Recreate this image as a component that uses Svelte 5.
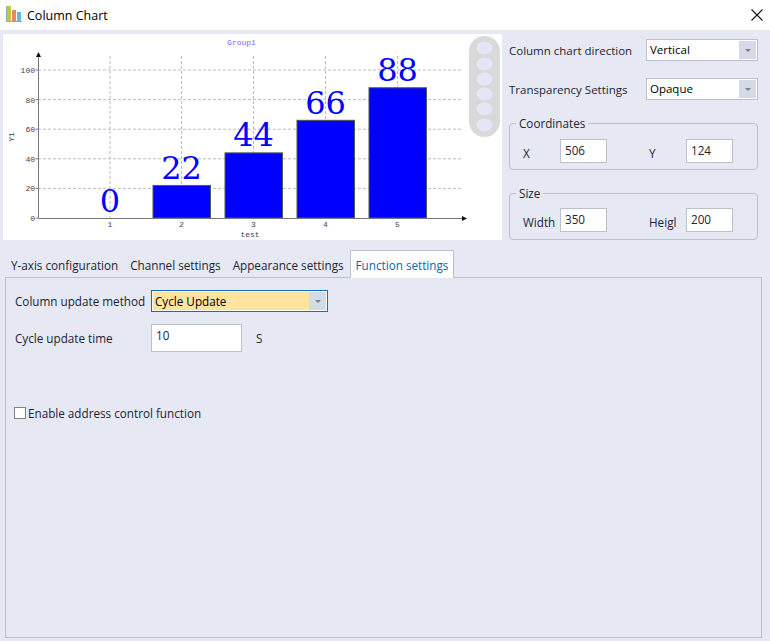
<script lang="ts">
	const yTicks = [0, 20, 40, 60, 80, 100];
	const slots = [110, 181.5, 253.5, 325.5, 397.5];
	const values = [0, 22, 44, 66, 88];
	const knobs = [48, 64, 79, 94, 109, 125];
	const tabs = ['Y-axis configuration', 'Channel settings', 'Appearance settings', 'Function settings'];

	const baseY = 218;
	const scale = 1.48;
	function yOf(v: number) {
		return baseY - v * scale;
	}
</script>

<div class="window">
	<header class="titlebar">
		<svg class="app-icon" width="16" height="16" viewBox="0 0 16 16">
			<rect x="1" y="0" width="4" height="15" fill="#b4cf3a" />
			<rect x="6" y="4" width="4" height="11" fill="#f0826a" />
			<rect x="11" y="6" width="4" height="9" fill="#5cb8ea" />
			<path d="M0.5 0v15.5H16" fill="none" stroke="#9aa8b4" />
		</svg>
		<span class="title">Column Chart</span>
		<svg class="close" width="12" height="12" viewBox="0 0 12 12">
			<path d="M0.5 0.5l11 11M11.5 0.5l-11 11" stroke="#111" stroke-width="1.1" />
		</svg>
	</header>

	<div class="top">
		<svg class="chart" width="499" height="206" viewBox="3 34 499 206">
			<text class="group" x="241.5" y="45" text-anchor="middle">Group1</text>

			{#each yTicks.slice(1) as t}
				<line class="grid" x1="38" x2="462" y1={yOf(t)} y2={yOf(t)} />
			{/each}
			{#each slots as x}
				<line class="grid" x1={x} x2={x} y1="56" y2={baseY} />
			{/each}

			{#each slots as x, i}
				{#if values[i] > 0}
					<rect class="bar" x={x - 28.5} y={yOf(values[i])} width="57.5" height={values[i] * scale} />
				{/if}
				<text class="value" x={x} y={yOf(values[i]) - 6.5} text-anchor="middle">{values[i]}</text>
				<text class="tick" x={x} y="227" text-anchor="middle">{i + 1}</text>
			{/each}

			<path class="axis" d="M38.5 56V218.5H462" />
			<path d="M38.5 52l-2.5 5h5z" fill="#111" />
			<path d="M467 218.5l-5-2.5v5z" fill="#111" />

			{#each yTicks as t}
				<line class="axis" x1="35.5" x2="38" y1={yOf(t)} y2={yOf(t)} />
				<text class="tick" x="35" y={yOf(t) + 3} text-anchor="end">{t}</text>
			{/each}

			<text class="tick" x="250" y="237" text-anchor="middle">test</text>
			<text class="tick" transform="translate(14 137) rotate(-90)" text-anchor="middle">Y1</text>

			<rect x="469" y="36" width="31" height="101" rx="15.5" fill="#d9d9d9" />
			{#each knobs as cy}
				<ellipse cx="484.5" {cy} rx="8" ry="6.5" fill="#e4e6f6" />
			{/each}
		</svg>

		<aside class="side">
			<div class="field">
				<span>Column chart direction</span>
				<div class="combo"><span class="combo-text">Vertical</span><span class="combo-btn"><i></i></span></div>
			</div>
			<div class="field">
				<span>Transparency Settings</span>
				<div class="combo"><span class="combo-text">Opaque</span><span class="combo-btn"><i></i></span></div>
			</div>
			<fieldset class="coords">
				<legend>Coordinates</legend>
				<label class="pair"><span>X</span><input value="506" readonly /></label>
				<label class="pair"><span>Y</span><input value="124" readonly /></label>
			</fieldset>
			<fieldset class="size">
				<legend>Size</legend>
				<label class="pair"><span>Width</span><input value="350" readonly /></label>
				<label class="pair"><span>Heigl</span><input value="200" readonly /></label>
			</fieldset>
		</aside>
	</div>

	<nav class="tabs">
		{#each tabs as tab, i}
			<div class="tab" class:active={i === tabs.length - 1}>{tab}</div>
		{/each}
	</nav>

	<section class="pane">
		<div class="row first">
			<span class="row-label">Column update method</span>
			<div class="combo focused"><span class="combo-text">Cycle Update</span><span class="combo-btn"><i></i></span></div>
		</div>
		<div class="row second">
			<span class="row-label">Cycle update time</span>
			<input class="time" value="10" readonly />
			<span class="unit">S</span>
		</div>
		<label class="check">
			<span class="box"></span>
			Enable address control function
		</label>
	</section>
</div>

<style>
	:global(body) {
		margin: 0;
		background: #e6e9f3;
	}

	.window {
		width: 770px;
		height: 641px;
		overflow: hidden;
		background: #e6e9f3;
		color: #1c2433;
		font-family: "Open Sans", "Noto Sans", sans-serif;
		font-size: 11.7px;
	}

	.titlebar {
		height: 30px;
		background: #fff;
		display: flex;
		align-items: center;
		padding: 0 7px 0 6px;
		box-sizing: border-box;
	}

	.app-icon {
		margin-right: 5px;
		margin-bottom: 2px;
	}

	.title {
		flex: 1;
		font-size: 12.5px;
		color: #000;
	}

	.top {
		display: flex;
		padding: 4px 0 0 3px;
		height: 206px;
	}

	.chart {
		display: block;
		background: #fff;
		flex: none;
	}

	.group {
		font: 8px "Liberation Mono", monospace;
		fill: #6a6aff;
	}

	.grid {
		stroke: #bdbdbd;
		stroke-width: 1;
		stroke-dasharray: 3 2;
	}

	.axis {
		fill: none;
		stroke: #777;
		stroke-width: 1;
	}

	.bar {
		fill: #0000ff;
		stroke: #555;
		stroke-width: 1;
	}

	.value {
		font: 32px "DejaVu Serif", serif;
		fill: #0000ff;
	}

	.tick {
		font: 8px "Liberation Mono", monospace;
		fill: #444;
	}

	.side {
		width: 268px;
		flex: none;
		padding: 5px 12px 0 7px;
		box-sizing: border-box;
	}

	.field {
		display: flex;
		align-items: center;
		justify-content: space-between;
		height: 22px;
		margin-bottom: 17px;
		font-size: 11.5px;
	}

	.combo {
		display: flex;
		width: 112px;
		height: 22px;
		box-sizing: border-box;
		border: 1px solid #bcc0cc;
		background: #fff;
		padding: 1px;
		color: #000;
		flex: none;
	}

	.combo-text {
		flex: 1;
		padding-left: 2px;
		line-height: 18px;
	}

	.combo-btn {
		width: 17px;
		background: #d6dae8;
		display: flex;
		align-items: center;
		justify-content: center;
	}

	.combo-btn i {
		border: 3px solid transparent;
		border-top: 3px solid #7a7f8c;
		border-bottom: 0;
	}

	fieldset {
		margin: 0;
		min-width: 0;
		border: 1px solid #bcc0cc;
		border-radius: 4px;
		padding: 9px 0 0 13px;
		display: flex;
		gap: 42px;
		height: 54px;
		box-sizing: border-box;
		align-items: flex-start;
	}

	.coords {
		margin-top: -1px;
	}

	.size {
		margin-top: 16px;
		padding-top: 8px;
	}

	legend {
		padding: 0 3px;
		margin-left: -7px;
		line-height: 14px;
	}

	.pair {
		display: flex;
		align-items: center;
	}

	.pair span {
		width: 37px;
		flex: none;
		padding-top: 3px;
		white-space: nowrap;
	}

	input {
		width: 47px;
		height: 24px;
		box-sizing: border-box;
		border: 1px solid #bcc0cc;
		padding: 0 0 2px 4px;
		margin: 0;
		font: inherit;
		color: #1c2433;
		background: #fff;
		outline: none;
	}

	.tabs {
		display: flex;
		margin-top: 10px;
		padding-left: 5px;
		height: 28px;
		position: relative;
		z-index: 1;
	}

	.tab {
		padding: 7px 6px 0;
		box-sizing: border-box;
		height: 28px;
		white-space: nowrap;
	}

	.tab.active {
		background: #fff;
		border: 1px solid #bcc0cc;
		border-bottom: 0;
		color: #0a66a8;
		padding: 6px 5px 0;
	}

	.pane {
		width: 757px;
		height: 361px;
		margin: -1px 0 0 5px;
		box-sizing: border-box;
		border: 1px solid #bcc0cc;
		padding: 12px 0 0 9px;
	}

	.row {
		display: flex;
		align-items: center;
	}

	.row-label {
		width: 136px;
		flex: none;
		white-space: nowrap;
	}

	.focused {
		width: 177px;
		border: 1px solid #0f6fc0;
	}

	.focused .combo-text {
		background: #ffe4a0;
	}

	.second {
		margin-top: 12px;
	}

	.time {
		width: 91px;
		height: 28px;
		padding: 0 0 6px 4px;
	}

	.unit {
		margin-left: 14px;
	}

	.check {
		display: flex;
		align-items: center;
		margin: 53px 0 0 -1px;
	}

	.box {
		width: 12px;
		height: 12px;
		box-sizing: border-box;
		border: 1px solid #7a8294;
		background: #fff;
		margin-right: 2px;
	}
</style>
